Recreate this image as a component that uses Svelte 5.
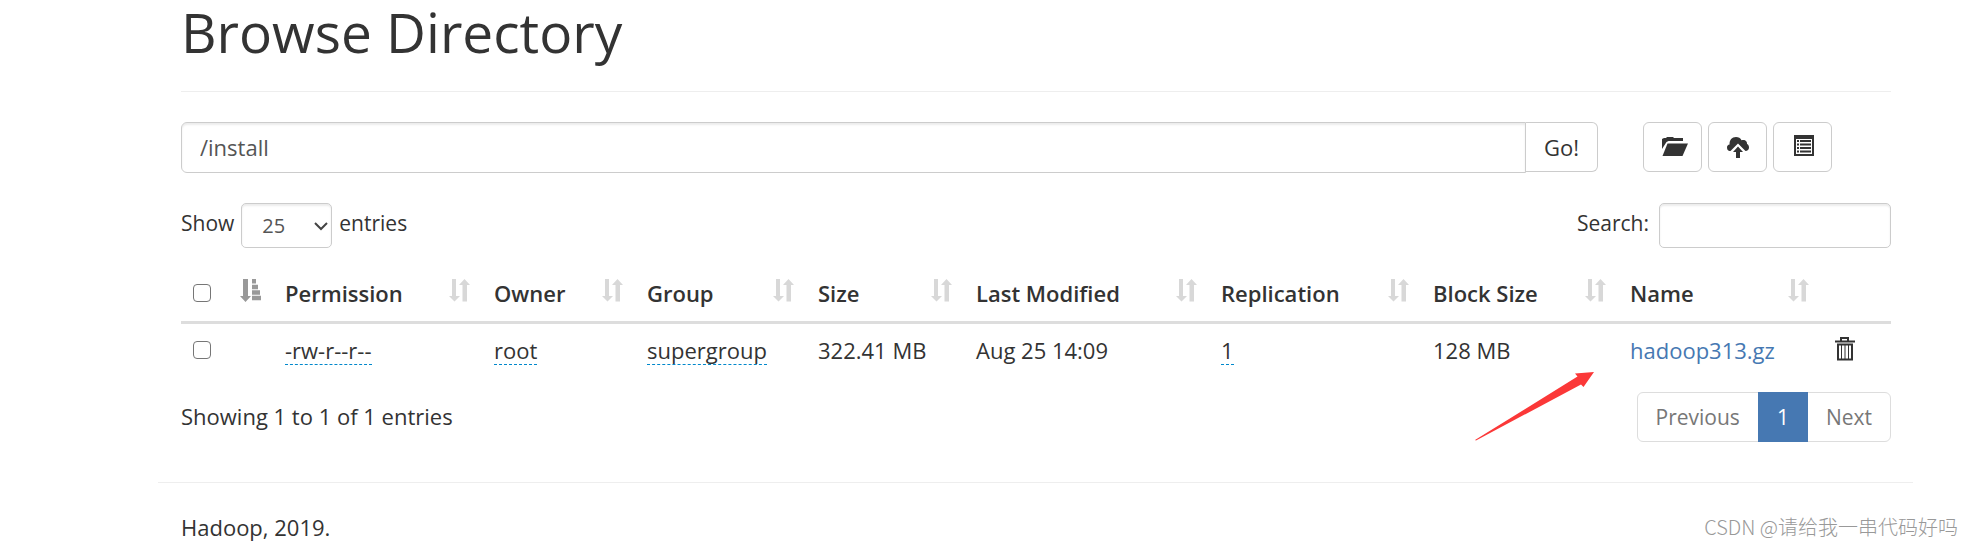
<script lang="ts">
	interface Column {
		label: string;
		width: number;
		sort?: 'both' | 'asc';
	}

	interface File_Entry {
		permission: string;
		owner: string;
		group: string;
		size: string;
		modified: string;
		replication: number;
		block_size: string;
		name: string;
	}

	// widths are relative shares of the table
	const columns: Array<Column> = [
		{label: '', width: 92, sort: 'asc'},
		{label: 'Permission', width: 209, sort: 'both'},
		{label: 'Owner', width: 153, sort: 'both'},
		{label: 'Group', width: 171, sort: 'both'},
		{label: 'Size', width: 158, sort: 'both'},
		{label: 'Last Modified', width: 245, sort: 'both'},
		{label: 'Replication', width: 212, sort: 'both'},
		{label: 'Block Size', width: 197, sort: 'both'},
		{label: 'Name', width: 203, sort: 'both'},
		{label: '', width: 70},
	];
	const total_width = columns.reduce((sum, c) => sum + c.width, 0);

	const files: Array<File_Entry> = [
		{
			permission: '-rw-r--r--',
			owner: 'root',
			group: 'supergroup',
			size: '322.41 MB',
			modified: 'Aug 25 14:09',
			replication: 1,
			block_size: '128 MB',
			name: 'hadoop313.gz',
		},
	];

	let directory = $state('/install');
	let page_size = $state('25');
	let search = $state('');
</script>

<div class="container">
	<header class="page_header">
		<h1>Browse Directory</h1>
	</header>

	<div class="path_row">
		<form class="input_group" onsubmit={(e) => e.preventDefault()}>
			<input class="form_control path_input" type="text" aria-label="Directory" bind:value={directory} />
			<button class="btn btn_go" type="submit">Go!</button>
		</form>
		<div class="actions">
			<button class="btn btn_icon" type="button" aria-label="Create directory">
				<svg viewBox="0 0 26 26" aria-hidden="true">
					<path d="M0 15V5l2-1h2l1-1h6l1 1h9v3H6.500L4.500 8Z" />
					<path d="M5.500 9.500H26L20.500 22H0.500Z" />
				</svg>
			</button>
			<button class="btn btn_icon" type="button" aria-label="Upload files">
				<svg viewBox="0 0 26 26" aria-hidden="true">
					<path
						d="M2.500 17C0.500 16.500 0 15 0 13.500C0 11.800 1 10.800 2.600 10.500C2.200 6 5 3 9 3C11.500 3 13.500 4.200 14.500 6.200C18 5 20.500 7.500 20 10C21.500 10.500 22 12 22 13.500C22 15.500 20.500 17 18.500 17L11 9.500L3.500 17Z"
					/>
					<path d="M11 12.500L16 18H13V24H9V18H6Z" />
				</svg>
			</button>
			<button class="btn btn_icon" type="button" aria-label="Cut and paste">
				<svg viewBox="0 0 26 26" aria-hidden="true">
					<path fill-rule="evenodd" d="M2 1H22V22H2ZM4 5V20H20V5Z" />
					<path
						d="M5 6h2v2H5ZM8 6h11v2H8ZM5 9.500h2v2H5ZM8 9.500h11v2H8ZM5 13h2v2H5ZM8 13h11v2H8ZM5 16.500h2v2H5ZM8 16.500h11v2H8Z"
					/>
				</svg>
			</button>
		</div>
	</div>

	<div class="table_tools">
		<label class="tool">
			Show
			<span class="select_wrap">
				<select class="form_control" bind:value={page_size}>
					<option>10</option>
					<option>25</option>
					<option>50</option>
					<option>100</option>
				</select>
				<svg class="chevron" viewBox="0 0 14 10" aria-hidden="true">
					<path d="M1 2l6 6l6-6" />
				</svg>
			</span>
			entries
		</label>
		<label class="tool">
			Search:
			<input class="form_control search_input" type="search" bind:value={search} />
		</label>
	</div>

	<table>
		<colgroup>
			{#each columns as column}
				<col style:width="{(column.width / total_width) * 100}%" />
			{/each}
		</colgroup>
		<thead>
			<tr>
				{#each columns as column, i}
					<th>
						<div class="th_inner">
							{#if i === 0}
								<input type="checkbox" aria-label="Select all" />
							{:else}
								<span>{column.label}</span>
							{/if}
							{#if column.sort === 'asc'}
								<svg class="sort sort_active" viewBox="0 0 21 23" aria-hidden="true">
									<path d="M3 0h5v17h3l-5.500 6L0 17h3Z" />
									<path d="M12 0h4v4.500h-4ZM12 5.700h6v4.500h-6ZM12 11.300h8v4.500h-8ZM12 16.800h9.500v4.500H12Z" />
								</svg>
							{:else if column.sort === 'both'}
								<svg class="sort" viewBox="0 0 21 23" aria-hidden="true">
									<path d="M3 0h4v17h4l-5.500 5.500L0 17h3Z" />
									<path d="M13.500 22.500h4.500V6h3l-5.500-6L10 6h3.500Z" />
								</svg>
							{/if}
						</div>
					</th>
				{/each}
			</tr>
		</thead>
		<tbody>
			{#each files as file}
				<tr>
					<td><input type="checkbox" aria-label="Select {file.name}" /></td>
					<td><span class="editable">{file.permission}</span></td>
					<td><span class="editable">{file.owner}</span></td>
					<td><span class="editable">{file.group}</span></td>
					<td>{file.size}</td>
					<td>{file.modified}</td>
					<td><span class="editable">{file.replication}</span></td>
					<td>{file.block_size}</td>
					<td><a href="#{file.name}">{file.name}</a></td>
					<td>
						<button class="btn_trash" type="button" aria-label="Delete {file.name}">
							<svg viewBox="0 0 22 26" aria-hidden="true">
								<path d="M8 4V1h7v3" />
								<path d="M2 4.500h20" />
								<path d="M5 7.500V22.500h14V7.500Z" />
								<path class="thin" d="M8.500 8v14M12 8v14M15.500 8v14" />
							</svg>
						</button>
					</td>
				</tr>
			{/each}
		</tbody>
	</table>

	<div class="table_footer">
		<div>Showing 1 to 1 of 1 entries</div>
		<nav class="pagination" aria-label="Pages">
			<a href="#previous">Previous</a>
			<a class="active" href="#1" aria-current="page">1</a>
			<a href="#next">Next</a>
		</nav>
	</div>

	<svg class="arrow" viewBox="0 0 120 70" aria-hidden="true">
		<path d="M0 68L102.500 4.500L100 1.500L119 0L108.500 15L106 12.500L1 68.500Z" />
	</svg>
</div>

<footer class="page_footer">
	<p>Hadoop, 2019.</p>
</footer>
<div class="watermark">CSDN @请给我一串代码好吗</div>

<style>
	:global(body) {
		background: #fff;
		color: #333;
		font-family: 'Open Sans', 'Noto Sans', 'Noto Sans CJK SC', sans-serif;
		font-size: 22px;
		line-height: 32px;
	}

	* {
		box-sizing: border-box;
	}

	input,
	select,
	button {
		font: inherit;
		color: inherit;
	}

	a {
		color: #4678b2;
		text-decoration: none;
	}

	.container {
		position: relative;
		margin: 0 59px 0 158px;
		padding: 0 22px 40px 23px;
	}

	.page_header {
		padding-bottom: 27px;
		border-bottom: 1px solid #eee;
	}

	h1 {
		margin: 0;
		font-size: 55px;
		font-weight: 400;
		line-height: 64px;
	}

	.path_row {
		display: flex;
		gap: 45px;
		margin-top: 30px;
	}

	.input_group {
		display: flex;
		flex: 1;
	}

	.form_control {
		border: 1px solid #ccc;
		border-radius: 5px;
		background: #fff;
		box-shadow: inset 0 2px 2px rgba(0, 0, 0, 0.08);
		color: #555;
	}

	.path_input {
		flex: 1;
		min-width: 0;
		height: 51px;
		padding: 0 18px 2px;
		border-radius: 6px 0 0 6px;
	}

	.btn {
		height: 50px;
		border: 1px solid #ccc;
		border-radius: 6px;
		background: #fff;
	}

	.btn_go {
		padding: 0 18px;
		border-left: 0;
		border-radius: 0 6px 6px 0;
	}

	.actions {
		display: flex;
		gap: 6px;
		width: 248px;
	}

	.btn_icon {
		display: flex;
		align-items: center;
		width: 59px;
		padding: 0 0 0 18px;
	}

	.btn_icon svg {
		width: 26px;
		height: 26px;
		fill: #333;
	}

	.table_tools {
		display: flex;
		justify-content: space-between;
		margin-top: 30px;
		font-size: 21px;
		line-height: 40px;
	}

	.tool {
		display: flex;
		align-items: flex-start;
		gap: 7px;
	}

	.select_wrap {
		display: grid;
		align-items: center;
	}

	.select_wrap > * {
		grid-area: 1 / 1;
	}

	select {
		width: 91px;
		height: 45px;
		padding: 0 20px;
		appearance: none;
		font-size: 20px;
	}

	.chevron {
		justify-self: end;
		width: 14px;
		height: 10px;
		margin-right: 4px;
		fill: none;
		stroke: #444;
		stroke-width: 2;
		pointer-events: none;
	}

	.search_input {
		width: 232px;
		height: 45px;
		margin-left: 3px;
		padding: 0 15px;
	}

	table {
		width: 100%;
		margin-top: 17px;
		border-collapse: collapse;
		table-layout: fixed;
	}

	th {
		padding: 12px;
		border-bottom: 3px solid #ddd;
		font-weight: 600;
		text-align: left;
		white-space: nowrap;
	}

	td {
		padding: 10px 12px;
		white-space: nowrap;
	}

	.th_inner {
		display: flex;
		align-items: center;
		justify-content: space-between;
		height: 32px;
	}

	.sort {
		flex: none;
		width: 21px;
		height: 23px;
		margin-bottom: 6px;
		fill: #d8d8d8;
	}

	.sort_active {
		fill: #999;
	}

	input[type='checkbox'] {
		display: block;
		width: 18px;
		height: 18px;
		margin: 0;
		border: 1px solid #767676;
		border-radius: 4px;
		background: #fff;
		appearance: none;
	}

	.editable {
		display: inline-block;
		border-bottom: 1px dashed #0088cc;
		line-height: 28px;
	}

	.btn_trash {
		display: block;
		padding: 0;
		border: 0;
		background: none;
	}

	.btn_trash svg {
		display: block;
		width: 22px;
		height: 26px;
		fill: none;
		stroke: #333;
		stroke-width: 2;
	}

	.btn_trash .thin {
		stroke-width: 1;
	}

	.table_footer {
		display: flex;
		align-items: flex-start;
		justify-content: space-between;
		margin-top: 16px;
		line-height: 48px;
	}

	.pagination {
		display: flex;
		border: 1px solid #ddd;
		border-radius: 6px;
		font-size: 21px;
	}

	.pagination a {
		padding: 0 18px;
		color: #777;
	}

	.pagination .active {
		margin: -1px 0;
		padding: 1px 19px;
		background: #4678b2;
		color: #fff;
	}

	.arrow {
		position: absolute;
		top: 372px;
		right: 318px;
		width: 120px;
		height: 70px;
		fill: #fb3838;
	}

	.page_footer {
		margin: 0 59px 0 158px;
		padding: 28px 23px 0;
		border-top: 1px solid #eee;
	}

	.page_footer p {
		margin: 0;
	}

	.watermark {
		position: absolute;
		right: 14px;
		bottom: 2px;
		color: #999;
		font-family: 'Noto Sans CJK SC', sans-serif;
		font-size: 20px;
		font-weight: 300;
	}
</style>
